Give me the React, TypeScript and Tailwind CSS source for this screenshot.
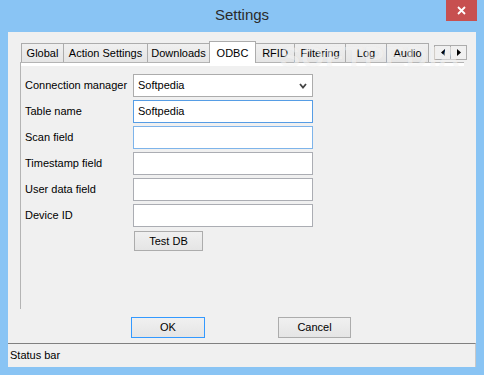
import React from 'react';

const FONT = { fontFamily: '"Liberation Sans", Arial, sans-serif' };

const TABS = [
  { label: 'Global', w: 'w-[43px]' },
  { label: 'Action Settings', w: 'w-[85px]' },
  { label: 'Downloads', w: 'w-[63px]' },
  { label: 'ODBC', w: 'w-[47px]', active: true },
  { label: 'RFID', w: 'w-[40px]' },
  { label: 'Filtering', w: 'w-[52px]' },
  { label: 'Log', w: 'w-[42px]' },
  { label: 'Audio', w: 'w-[43px]' },
];

const FIELDS = [
  { label: 'Connection manager', value: 'Softpedia', combo: true, border: 'border-[#acacac]' },
  { label: 'Table name', value: 'Softpedia', border: 'border-[#569de5]' },
  { label: 'Scan field', value: '', border: 'border-[#7eb4ea]' },
  { label: 'Timestamp field', value: '', border: 'border-[#abadb3]' },
  { label: 'User data field', value: '', border: 'border-[#abadb3]' },
  { label: 'Device ID', value: '', border: 'border-[#abadb3]' },
];

const Tab = ({ label, w, active }: { label: string; w: string; active?: boolean }) =>
  active ? (
    <div
      className={`${w} relative z-10 -mb-px -ml-px flex h-[22px] items-start justify-center border border-b-0 border-[#acacac] bg-white pt-[3px]`}
    >
      {label}
    </div>
  ) : (
    <div
      className={`${w} -ml-px flex h-[19px] items-center justify-center border border-b-0 border-[#acacac] bg-gradient-to-b from-[#f0f0f0] to-[#e5e5e5] first:ml-0`}
    >
      {label}
    </div>
  );

const Arrow = ({ dir }: { dir: 'left' | 'right' }) => (
  <div className="-ml-px flex h-[15px] w-[17px] items-center justify-center border border-[#acacac] bg-[#f0f0f0] first:ml-0">
    <svg width="4" height="7" viewBox="0 0 4 7">
      {dir === 'left' ? <path d="M4 0 L0 3.5 L4 7 Z" fill="#000" /> : <path d="M0 0 L4 3.5 L0 7 Z" fill="#000" />}
    </svg>
  </div>
);

const Button = ({ children, primary, className = '' }: { children: React.ReactNode; primary?: boolean; className?: string }) => (
  <div
    className={`flex items-center justify-center border bg-gradient-to-b from-[#f0f0f0] to-[#e5e5e5] text-black ${
      primary ? 'border-[#3399ff]' : 'border-[#acacac]'
    } ${className}`}
  >
    {children}
  </div>
);

export default function App() {
  return (
    <div className="flex h-[375px] w-[484px] flex-col overflow-hidden bg-[#89c4f4] px-[8px] pb-[8px] text-[11px] text-black" style={FONT}>
      {/* Title bar */}
      <div className="relative flex h-[32px] shrink-0 items-center justify-center">
        <span className="pb-[1px] text-[15px] text-[#2b2b2b]">Settings</span>
        <div className="absolute -right-px top-0 flex h-[21px] w-[31px] items-center justify-center bg-[#c75050]">
          <svg width="9" height="9" viewBox="0 0 9 9">
            <path d="M1 1 L8 8 M8 1 L1 8" stroke="#fff" strokeWidth="1.8" />
          </svg>
        </div>
      </div>

      {/* Client area */}
      <div className="relative flex flex-1 flex-col overflow-hidden bg-[#f0f0f0]">
        <div className="flex-1">
          {/* Tabs */}
          <div className="mt-[9px] flex h-[21px] items-end pl-[13px]">
            {TABS.map(t => (
              <Tab key={t.label} {...t} />
            ))}
            <div className="mb-[2px] ml-[5px] flex">
              <Arrow dir="left" />
              <Arrow dir="right" />
            </div>
          </div>

          {/* Tab page */}
          <div className="ml-[12px] h-[247px] w-[444px] border-l border-t border-[#b4b4b4]">
            <div className="h-[3px] bg-white" />
            <div className="flex flex-col gap-[3px] pl-[4px] pt-[8px]">
              {FIELDS.map(f => (
                <div key={f.label} className="flex items-center">
                  <div className="w-[108px]">{f.label}</div>
                  <div className={`flex h-[23px] w-[180px] items-center justify-between border bg-white pl-[4px] pr-[5px] ${f.border}`}>
                    <span>{f.value}</span>
                    {f.combo && (
                      <svg width="8" height="6" viewBox="0 0 8 6">
                        <path d="M1 1 L4 4.5 L7 1" stroke="#444" strokeWidth="1.8" fill="none" />
                      </svg>
                    )}
                  </div>
                </div>
              ))}
              <div className="flex pl-[109px] pt-[1px]">
                <Button className="h-[20px] w-[69px]">Test DB</Button>
              </div>
            </div>
          </div>

          {/* Dialog buttons */}
          <div className="mt-[8px] flex gap-[73px] pl-[123px]">
            <Button primary className="h-[21px] w-[74px]">
              OK
            </Button>
            <Button className="h-[21px] w-[73px]">Cancel</Button>
          </div>
        </div>

        {/* Status bar */}
        <div className="flex h-[24px] shrink-0 items-center border-r border-t border-r-[#c8c8c8] border-t-[#808080] pl-[2px]">
          Status bar
        </div>

        {/* Watermark */}
        <div
          className="pointer-events-none absolute left-[272px] top-[10px] select-none text-[30px] font-bold leading-none tracking-[1px] text-white/50"
          style={{ textShadow: '0 0 1px rgba(0,0,0,0.06)' }}
        >
          SOFTPEDIA
        </div>
      </div>
    </div>
  );
}
